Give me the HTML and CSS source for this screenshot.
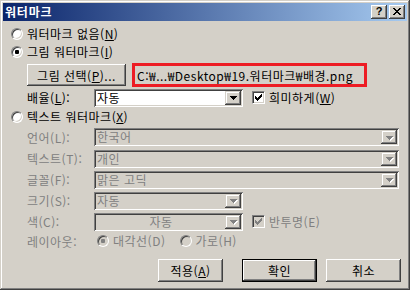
FILE: index.html
```html
<!DOCTYPE html>
<html lang="ko">
<head>
<meta charset="utf-8">
<title>워터마크</title>
<link rel="stylesheet" href="styles.css">
</head>
<body>
<div class="window">
  <div class="titlebar">
    <span class="title">워터마크</span>
    <div class="tb-btns">
      <div class="tb-btn"><span class="q">?</span></div>
      <div class="tb-btn">
        <svg width="8" height="7" viewBox="0 0 8 7" shape-rendering="crispEdges"><path fill="#000" d="M0 0h2v1h-2z M6 0h2v1h-2z M1 1h2v1h-2z M5 1h2v1h-2z M2 2h4v1h-4z M3 3h2v1h-2z M2 4h4v1h-4z M1 5h2v1h-2z M5 5h2v1h-2z M0 6h2v1h-2z M6 6h2v1h-2z"/></svg>
      </div>
    </div>
  </div>
  <div class="body">
    <div class="row h18"><span class="radio"></span><span class="txt">워터마크 없음(<u>N</u>)</span></div>
    <div class="row h18"><span class="radio on"></span><span class="txt">그림 워터마크(<u>I</u>)</span></div>
    <div class="row pic indent">
      <div class="btn pick">그림 선택(<u>P</u>)...</div>
      <div class="path">C:₩...₩Desktop₩19.워터마크₩배경.png</div>
    </div>
    <div class="row scale indent">
      <span class="label">배율(<u>L</u>):</span>
      <div class="combo short"><span class="val">자동</span><span class="dd"><svg width="7" height="4" viewBox="0 0 7 4" shape-rendering="crispEdges"><path fill="#000" d="M0 0h7v1h-7z M1 1h5v1h-5z M2 2h3v1h-3z M3 3h1v1h-1z"/></svg></span></div>
      <span class="check"><svg width="7" height="7" viewBox="0 0 7 7" shape-rendering="crispEdges"><path fill="#000" d="M6 0h1v1h-1z M5 1h2v1h-2z M0 2h1v1h-1z M4 2h3v1h-3z M0 3h2v1h-2z M3 3h3v1h-3z M0 4h5v1h-5z M1 5h3v1h-3z M2 6h1v1h-1z"/></svg></span>
      <span class="txt">희미하게(<u>W</u>)</span>
    </div>
    <div class="row h18 textmark"><span class="radio"></span><span class="txt">텍스트 워터마크(<u>X</u>)</span></div>

    <div class="row field indent dis first">
      <span class="label">언어(L):</span>
      <div class="combo wide off"><span class="val">한국어</span><span class="dd"><svg class="arr" width="8" height="5" viewBox="0 0 8 5" shape-rendering="crispEdges"><path fill="#fff" d="M1 1h7v1h-7z M2 2h5v1h-5z M3 3h3v1h-3z M4 4h1v1h-1z"/><path fill="#808080" d="M0 0h7v1h-7z M1 1h5v1h-5z M2 2h3v1h-3z M3 3h1v1h-1z"/></svg></span></div>
    </div>
    <div class="row field indent dis">
      <span class="label">텍스트(T):</span>
      <div class="combo wide off"><span class="val">개인</span><span class="dd"><svg class="arr" width="8" height="5" viewBox="0 0 8 5" shape-rendering="crispEdges"><path fill="#fff" d="M1 1h7v1h-7z M2 2h5v1h-5z M3 3h3v1h-3z M4 4h1v1h-1z"/><path fill="#808080" d="M0 0h7v1h-7z M1 1h5v1h-5z M2 2h3v1h-3z M3 3h1v1h-1z"/></svg></span></div>
    </div>
    <div class="row field indent dis">
      <span class="label">글꼴(F):</span>
      <div class="combo wide off"><span class="val">맑은 고딕</span><span class="dd"><svg class="arr" width="8" height="5" viewBox="0 0 8 5" shape-rendering="crispEdges"><path fill="#fff" d="M1 1h7v1h-7z M2 2h5v1h-5z M3 3h3v1h-3z M4 4h1v1h-1z"/><path fill="#808080" d="M0 0h7v1h-7z M1 1h5v1h-5z M2 2h3v1h-3z M3 3h1v1h-1z"/></svg></span></div>
    </div>
    <div class="row field indent dis">
      <span class="label">크기(S):</span>
      <div class="combo short off"><span class="val">자동</span><span class="dd"><svg class="arr" width="8" height="5" viewBox="0 0 8 5" shape-rendering="crispEdges"><path fill="#fff" d="M1 1h7v1h-7z M2 2h5v1h-5z M3 3h3v1h-3z M4 4h1v1h-1z"/><path fill="#808080" d="M0 0h7v1h-7z M1 1h5v1h-5z M2 2h3v1h-3z M3 3h1v1h-1z"/></svg></span></div>
    </div>
    <div class="row field indent dis">
      <span class="label">색(C):</span>
      <div class="combo short off"><span class="val center">자동</span><span class="dd"><svg class="arr" width="8" height="5" viewBox="0 0 8 5" shape-rendering="crispEdges"><path fill="#fff" d="M1 1h7v1h-7z M2 2h5v1h-5z M3 3h3v1h-3z M4 4h1v1h-1z"/><path fill="#808080" d="M0 0h7v1h-7z M1 1h5v1h-5z M2 2h3v1h-3z M3 3h1v1h-1z"/></svg></span></div>
      <span class="check off"><svg width="7" height="7" viewBox="0 0 7 7" shape-rendering="crispEdges"><path fill="#808080" d="M6 0h1v1h-1z M5 1h2v1h-2z M0 2h1v1h-1z M4 2h3v1h-3z M0 3h2v1h-2z M3 3h3v1h-3z M0 4h5v1h-5z M1 5h3v1h-3z M2 6h1v1h-1z"/></svg></span>
      <span class="txt">반투명(E)</span>
    </div>
    <div class="row h18 indent dis layout">
      <span class="label">레이아웃:</span>
      <span class="radio on off first-r"></span><span class="txt">대각선(D)</span>
      <span class="radio off second-r"></span><span class="txt">가로(H)</span>
    </div>

    <div class="row buttons">
      <div class="btn push apply">적용(<u>A</u>)</div>
      <div class="btn push default">확인</div>
      <div class="btn push">취소</div>
    </div>
  </div>
</div>
</body>
</html>
```

FILE: styles.css
```css
* { box-sizing: border-box; }
html, body { margin: 0; padding: 0; }
body {
  width: 410px;
  height: 290px;
  overflow: hidden;
  background: #d4d0c8;
  font-family: "Noto Sans CJK KR", "Noto Sans", sans-serif;
  font-size: 12px;
  letter-spacing: 0.5px;
  color: #000;
}
u { text-decoration: underline; text-underline-offset: 1px; }

.window {
  width: 410px;
  height: 290px;
  padding: 3px;
  background: #d4d0c8;
  box-shadow: inset -1px -1px #404040, inset 1px 1px #d4d0c8, inset -2px -2px #808080, inset 2px 2px #fff;
  display: flex;
  flex-direction: column;
}

.titlebar {
  height: 18px;
  flex: none;
  background: linear-gradient(to right, #0a246a, #a6caf0);
  display: flex;
  align-items: center;
  justify-content: space-between;
  padding: 0 2px;
}
.title {
  color: #fff;
  font-weight: bold;
  font-size: 12px;
  line-height: 18px;
  letter-spacing: 0.8px;
}
.tb-btns { display: flex; gap: 2px; }
.tb-btn {
  width: 16px;
  height: 14px;
  background: #d4d0c8;
  box-shadow: inset -1px -1px #404040, inset 1px 1px #fff, inset -2px -2px #808080;
  display: flex;
  align-items: center;
  justify-content: center;
  padding-bottom: 1px;
}
.q {
  font-family: "Liberation Sans", sans-serif;
  font-weight: bold;
  font-size: 11px;
  line-height: 11px;
  letter-spacing: 0;
}

.body {
  flex: 1;
  display: flex;
  flex-direction: column;
  padding: 4px 0 0 8px;
}
.row { display: flex; align-items: center; flex: none; }
.h18 { height: 18px; }
.indent { padding-left: 16px; }
.txt { line-height: 16px; white-space: nowrap; }
.radio + .txt { margin-left: 4px; }

.radio {
  width: 12px;
  height: 12px;
  flex: none;
  border-radius: 50%;
  border: 1px solid;
  border-color: #808080 #fff #fff #808080;
  background: #fff;
  box-shadow: inset 1px 1px #404040, inset -1px -1px #d4d0c8;
  display: flex;
  align-items: center;
  justify-content: center;
}
.radio.on::after {
  content: "";
  width: 4px;
  height: 4px;
  border-radius: 1px;
  background: #000;
}
.radio.off { background: #d4d0c8; }
.radio.on.off::after { background: #808080; }

.check {
  width: 13px;
  height: 13px;
  flex: none;
  border: 1px solid;
  border-color: #808080 #fff #fff #808080;
  background: #fff;
  box-shadow: inset 1px 1px #404040, inset -1px -1px #d4d0c8;
  display: flex;
  align-items: center;
  justify-content: center;
  margin-left: 9px;
  margin-right: 4px;
}
.check.off { background: #d4d0c8; }

.btn {
  background: #d4d0c8;
  box-shadow: inset -1px -1px #404040, inset 1px 1px #fff, inset -2px -2px #808080, inset 2px 2px #d4d0c8;
  display: flex;
  align-items: center;
  justify-content: center;
  white-space: nowrap;
}

.pic { height: 24px; margin-top: 2px; }
.pick { width: 99px; height: 22px; }
.path {
  margin-left: 6px;
  width: 235px;
  height: 24px;
  border: 3px solid #ed1c24;
  padding-left: 2px;
  display: flex;
  align-items: center;
  white-space: nowrap;
  overflow: hidden;
}

.label { width: 67px; flex: none; white-space: nowrap; }
.dis { color: #808080; }

.scale { height: 21px; }
.combo {
  height: 18px;
  flex: none;
  padding: 2px;
  display: flex;
  align-items: center;
  background: #fff;
  box-shadow: inset 1px 1px #808080, inset -1px -1px #fff, inset 2px 2px #404040, inset -2px -2px #d4d0c8;
}
.combo.off { background: #d4d0c8; }
.combo.short { width: 149px; }
.combo.wide { width: 305px; }
.val { flex: 1; padding-left: 1px; line-height: 14px; white-space: nowrap; }
.val.center { text-align: center; }
.dd {
  width: 16px;
  height: 14px;
  flex: none;
  background: #d4d0c8;
  box-shadow: inset -1px -1px #404040, inset 1px 1px #d4d0c8, inset -2px -2px #808080, inset 2px 2px #fff;
  display: flex;
  align-items: center;
  justify-content: center;
  padding-top: 1px;
}
.arr { margin-left: 1px; margin-top: 1px; }

.field { height: 21px; }
.field.first { height: 22px; }

.first-r { margin-left: 3px; }
.second-r { margin-left: 14px; }

.buttons {
  margin-top: 9px;
  justify-content: flex-end;
  padding-right: 6px;
}
.push { width: 75px; height: 23px; }
.push.apply { width: 65px; margin-right: 19px; }
.push.default {
  border: 1px solid #000;
  margin-right: 9px;
}
```
